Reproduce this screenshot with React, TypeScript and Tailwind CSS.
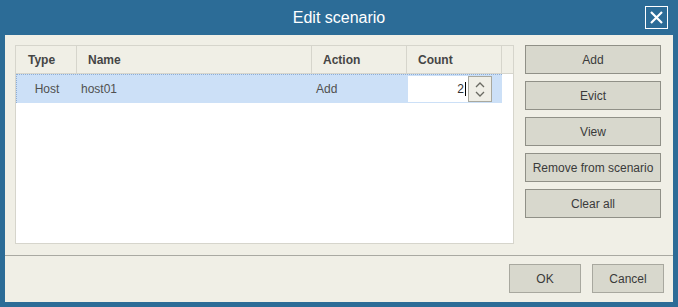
import React from "react";

const sideButtons = ["Add", "Evict", "View", "Remove from scenario", "Clear all"];

const font = { fontFamily: "'Liberation Sans', Arial, sans-serif" };

const Btn: React.FC<{ label: string; className?: string }> = ({ label, className = "" }) => (
  <button
    className={`h-[29px] bg-[#d8d8cd] border border-[#909087] text-[12px] text-[#3a3a3a] flex items-center justify-center ${className}`}
  >
    {label}
  </button>
);

const App: React.FC = () => {
  return (
    <div
      className="w-[678px] h-[307px] bg-[#2c6c97] flex flex-col px-[5px] pb-[5px] select-none"
      style={font}
    >
      {/* title bar */}
      <div className="h-[35px] relative flex items-center justify-center">
        <span className="text-white text-[16px] leading-none">Edit scenario</span>
        <div className="absolute right-[5px] top-[6px] w-[23px] h-[23px] border border-white flex items-center justify-center">
          <svg width="15" height="15" viewBox="0 0 15 15">
            <path d="M2 2 L13 13 M13 2 L2 13" stroke="white" strokeWidth="2.2" />
          </svg>
        </div>
      </div>

      <div className="flex-1 bg-[#f0efe6] flex flex-col">
        {/* main area */}
        <div className="h-[220px] flex pt-[10px] pl-[10px]">
          <div className="w-[499px] h-[199px] bg-white border border-[#d6d5cc] flex flex-col">
            {/* header */}
            <div className="h-[28px] bg-[#f0efe6] border-b border-[#d6d5cc] flex text-[12px] font-bold text-[#454545]">
              <div className="w-[61px] flex items-center pl-[12px] border-r border-[#d6d5cc]">Type</div>
              <div className="w-[235px] flex items-center pl-[11px] border-r border-[#d6d5cc]">Name</div>
              <div className="w-[95px] flex items-center pl-[11px] border-r border-[#d6d5cc]">Action</div>
              <div className="w-[95px] flex items-center pl-[11px] border-r border-[#d6d5cc]">Count</div>
              <div className="flex-1" />
            </div>
            {/* row */}
            <div className="h-[29px] w-[486px] bg-[#cce0f7] border-t border-l border-dotted border-[#8eaed6] flex text-[12px] text-[#505050]">
              <div className="w-[60px] flex items-center justify-center">Host</div>
              <div className="w-[235px] flex items-center pl-[4px]">host01</div>
              <div className="w-[96px] flex items-center pl-[4px]">Add</div>
              <div className="w-[84px] flex py-[1px]">
                <div className="w-[60px] bg-white flex items-center justify-end pr-[2px] text-[#303030]">
                  2<span className="w-[1px] h-[14px] bg-black ml-[1px]" />
                </div>
                <div className="w-[24px] bg-[#efeee6] border border-[#a8a89e] flex flex-col items-center justify-center gap-[3px]">
                  <svg width="10" height="6" viewBox="0 0 10 6">
                    <path d="M1 5 L5 1 L9 5" stroke="#6a6a62" strokeWidth="1.3" fill="none" />
                  </svg>
                  <svg width="10" height="6" viewBox="0 0 10 6">
                    <path d="M1 1 L5 5 L9 1" stroke="#6a6a62" strokeWidth="1.3" fill="none" />
                  </svg>
                </div>
              </div>
            </div>
          </div>

          <div className="ml-[11px] w-[136px] flex flex-col gap-[7px]">
            {sideButtons.map(b => (
              <Btn key={b} label={b} />
            ))}
          </div>
        </div>

        {/* footer */}
        <div className="flex-1 border-t border-[#a9a9a2] flex justify-end items-start pt-[8px] pr-[9px] gap-[11px]">
          <Btn label="OK" className="w-[72px] border-[#a8a89f]" />
          <Btn label="Cancel" className="w-[72px] border-[#a8a89f]" />
        </div>
      </div>
    </div>
  );
};

export default App;
